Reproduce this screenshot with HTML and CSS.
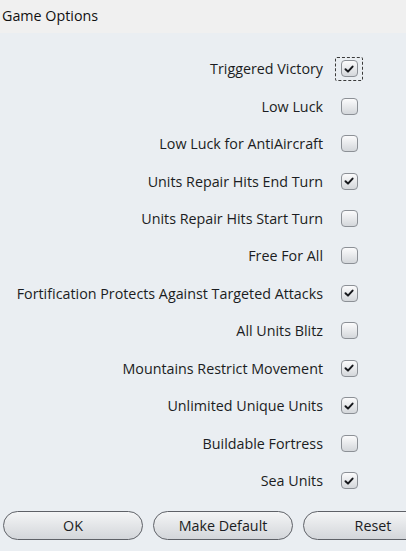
FILE: index.html
```html
<!DOCTYPE html>
<html>
<head>
<meta charset="utf-8">
<link rel="stylesheet" href="styles.css">
</head>
<body>
<div class="titlebar">Game Options</div>
<div class="panel">
  <div class="options">
    <div class="row"><span class="label">Triggered Victory</span><span class="focus"><span class="cb checked"><svg viewBox="0 0 12 12"><path d="M2.5 6.2 L5 8.6 L9.6 3.6"/></svg></span></span></div>
    <div class="row"><span class="label">Low Luck</span><span class="slot"><span class="cb"></span></span></div>
    <div class="row"><span class="label">Low Luck for AntiAircraft</span><span class="slot"><span class="cb"></span></span></div>
    <div class="row"><span class="label">Units Repair Hits End Turn</span><span class="slot"><span class="cb checked"><svg viewBox="0 0 12 12"><path d="M2.5 6.2 L5 8.6 L9.6 3.6"/></svg></span></span></div>
    <div class="row"><span class="label">Units Repair Hits Start Turn</span><span class="slot"><span class="cb"></span></span></div>
    <div class="row"><span class="label">Free For All</span><span class="slot"><span class="cb"></span></span></div>
    <div class="row"><span class="label">Fortification Protects Against Targeted Attacks</span><span class="slot"><span class="cb checked"><svg viewBox="0 0 12 12"><path d="M2.5 6.2 L5 8.6 L9.6 3.6"/></svg></span></span></div>
    <div class="row"><span class="label">All Units Blitz</span><span class="slot"><span class="cb"></span></span></div>
    <div class="row"><span class="label">Mountains Restrict Movement</span><span class="slot"><span class="cb checked"><svg viewBox="0 0 12 12"><path d="M2.5 6.2 L5 8.6 L9.6 3.6"/></svg></span></span></div>
    <div class="row"><span class="label">Unlimited Unique Units</span><span class="slot"><span class="cb checked"><svg viewBox="0 0 12 12"><path d="M2.5 6.2 L5 8.6 L9.6 3.6"/></svg></span></span></div>
    <div class="row"><span class="label">Buildable Fortress</span><span class="slot"><span class="cb"></span></span></div>
    <div class="row"><span class="label">Sea Units</span><span class="slot"><span class="cb checked"><svg viewBox="0 0 12 12"><path d="M2.5 6.2 L5 8.6 L9.6 3.6"/></svg></span></span></div>
  </div>
  <div class="buttons">
    <button class="btn">OK</button>
    <button class="btn">Make Default</button>
    <button class="btn">Reset</button>
  </div>
</div>
</body>
</html>
```
FILE: styles.css
```css
html, body {
  margin: 0;
  padding: 0;
  width: 406px;
  height: 551px;
  overflow: hidden;
  background: #eaeef2;
  font-family: "Open Sans", "Noto Sans", sans-serif;
  font-size: 14.3px;
  color: #1b1d22;
}
.titlebar {
  height: 33px;
  line-height: 31px;
  background: #f0f0f0;
  padding-left: 2px;
  font-size: 14.3px;
  color: #111;
}
.panel {
  display: flex;
  flex-direction: column;
}
.options {
  padding-top: 17px;
  display: flex;
  flex-direction: column;
}
.row {
  height: 37.45px;
  display: flex;
  align-items: center;
  justify-content: flex-end;
  padding-right: 43px;
}
.label {
  margin-right: 12px;
}
.slot, .focus {
  width: 28px;
  height: 24px;
  box-sizing: border-box;
  display: flex;
  align-items: center;
  justify-content: center;
}
.focus {
  border: 1px dashed #3a3a3a;
  border-radius: 2px;
}
.cb {
  width: 17px;
  height: 17px;
  box-sizing: border-box;
  border: 1px solid #8c9096;
  border-radius: 4px;
  background: linear-gradient(#fbfbfc, #d4d7db);
  display: flex;
  align-items: center;
  justify-content: center;
}
.cb svg {
  width: 12px;
  height: 12px;
}
.cb svg path {
  fill: none;
  stroke: #16181c;
  stroke-width: 2;
  stroke-linecap: round;
  stroke-linejoin: round;
}
.buttons {
  display: flex;
  gap: 10px;
  padding-left: 3px;
  margin-top: 12px;
  overflow: hidden;
}
.btn {
  flex: 0 0 140px;
  height: 29px;
  border: 1px solid #5e6167;
  border-radius: 15px;
  background: linear-gradient(#f4f5f6, #d3d6da);
  font-family: "Open Sans", "Noto Sans", sans-serif;
  font-size: 14.3px;
  color: #1b1d22;
  padding: 0;
}
```
